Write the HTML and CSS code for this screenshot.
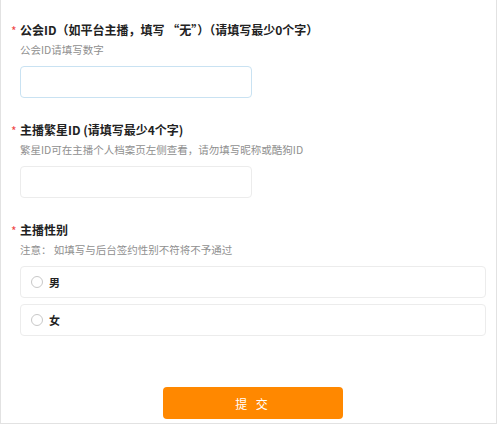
FILE: index.html
```html
<!DOCTYPE html>
<html lang="zh">
<head>
<meta charset="utf-8">
<link rel="stylesheet" href="styles.css">
</head>
<body>
<div class="page">
  <form class="form">
    <div class="field">
      <div class="title"><span class="req">*</span>公会ID（如平台主播，填写 “无”）（请填写最少0个字）</div>
      <div class="hint">公会ID请填写数字</div>
      <div class="input focus"></div>
    </div>
    <div class="field">
      <div class="title"><span class="req">*</span>主播繁星ID (请填写最少4个字)</div>
      <div class="hint">繁星ID可在主播个人档案页左侧查看，请勿填写昵称或酷狗ID</div>
      <div class="input"></div>
    </div>
    <div class="field">
      <div class="title"><span class="req">*</span>主播性别</div>
      <div class="hint">注意： 如填写与后台签约性别不符将不予通过</div>
      <div class="options">
        <label class="option"><span class="radio"></span><span class="opt-text">男</span></label>
        <label class="option"><span class="radio"></span><span class="opt-text">女</span></label>
      </div>
    </div>
    <div class="actions">
      <button type="button" class="submit">提 交</button>
    </div>
  </form>
</div>
</body>
</html>
```
FILE: styles.css
```css
html, body {
  margin: 0;
  padding: 0;
  background: #fff;
}
body {
  font-family: "Noto Sans CJK SC", "Noto Sans", sans-serif;
  color: #222;
}
.page {
  width: 495px;
  height: 423px;
  border-left: 1px solid #e2e2e2;
  border-right: 1px solid #e2e2e2;
  border-bottom: 1px solid #e2e2e2;
  box-sizing: content-box;
}
.form {
  padding: 21px 0 0 19px;
}
.field + .field {
  margin-top: 23px;
}
.title {
  font-size: 12px;
  font-weight: bold;
  line-height: 18px;
  height: 18px;
  display: flex;
  align-items: center;
  white-space: nowrap;
}
.req {
  color: #f04848;
  font-size: 12px;
  font-weight: normal;
  width: 9px;
  margin-left: -9px;
  padding-top: 2px;
}
.hint {
  margin-top: 4px;
  font-size: 10.5px;
  line-height: 14px;
  color: #8f8f8f;
  white-space: nowrap;
}
.input {
  margin-top: 9px;
  width: 232px;
  height: 32px;
  box-sizing: border-box;
  border: 1px solid #ececec;
  border-radius: 4px;
  background: #fff;
}
.input.focus {
  border-color: #c9e2f2;
}
.options {
  margin-top: 9px;
  display: flex;
  flex-direction: column;
  gap: 6px;
}
.option {
  width: 466px;
  height: 32px;
  box-sizing: border-box;
  border: 1px solid #ececec;
  border-radius: 4px;
  display: flex;
  align-items: center;
  padding-left: 10px;
  gap: 6px;
}
.radio {
  width: 12px;
  height: 12px;
  box-sizing: border-box;
  border: 1px solid #c8c8c8;
  border-radius: 50%;
  background: #fff;
}
.opt-text {
  font-size: 11px;
  font-weight: bold;
  color: #222;
}
.actions {
  margin-top: 51px;
  padding-left: 143px;
}
.submit {
  width: 180px;
  height: 32px;
  border: none;
  border-radius: 4px;
  background: #ff8800;
  color: #fff;
  font-family: "Noto Sans CJK SC", sans-serif;
  font-size: 12px;
  letter-spacing: 3px;
  padding: 0;
  cursor: pointer;
}
```
